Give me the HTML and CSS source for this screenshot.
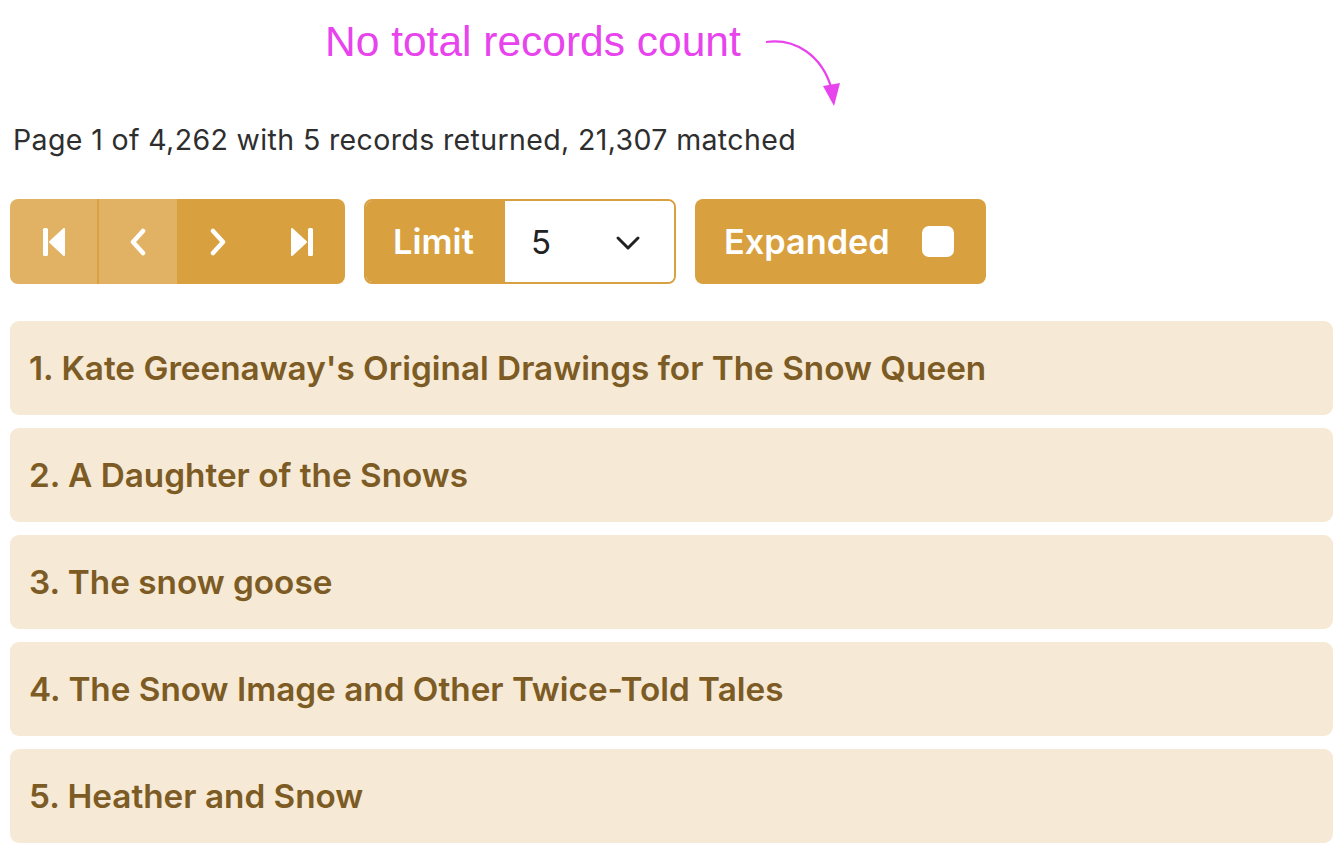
FILE: index.html
```html
<!DOCTYPE html>
<html lang="en">
<head>
<meta charset="utf-8">
<title>Results</title>
<link rel="stylesheet" href="styles.css">
</head>
<body>
<div class="page">
  <div class="note">
    <span class="note-text">No total records count</span>
    <svg class="note-arrow" width="80" height="80" viewBox="0 0 80 80">
      <path d="M2 8 C 30 4, 58 20, 68 56" fill="none" stroke="#e844ee" stroke-width="2.2"/>
      <path d="M59 52 L 76 49 L 70 72 Z" fill="#e844ee"/>
    </svg>
  </div>
  <p class="status">Page 1 of 4,262 with 5 records returned, 21,307 matched</p>
  <div class="toolbar">
    <div class="pager">
      <button class="pg pg-first is-disabled" aria-label="First page">
        <svg width="26" height="32" viewBox="0 0 26 32"><rect x="2" y="2" width="5" height="28" rx="1.5" fill="#fff"/><path d="M23 3 L 9 16 L 23 29 Z" fill="#fff" stroke="#fff" stroke-width="2" stroke-linejoin="round"/></svg>
      </button>
      <button class="pg pg-prev is-disabled" aria-label="Previous page">
        <svg width="22" height="32" viewBox="0 0 22 32"><path d="M16 5 L 6 16 L 16 27" fill="none" stroke="#fff" stroke-width="4.5" stroke-linecap="round" stroke-linejoin="round"/></svg>
      </button>
      <button class="pg pg-next" aria-label="Next page">
        <svg width="22" height="32" viewBox="0 0 22 32"><path d="M6 5 L 16 16 L 6 27" fill="none" stroke="#fff" stroke-width="4.5" stroke-linecap="round" stroke-linejoin="round"/></svg>
      </button>
      <button class="pg pg-last" aria-label="Last page">
        <svg width="26" height="32" viewBox="0 0 26 32"><path d="M3 3 L 17 16 L 3 29 Z" fill="#fff" stroke="#fff" stroke-width="2" stroke-linejoin="round"/><rect x="19" y="2" width="5" height="28" rx="1.5" fill="#fff"/></svg>
      </button>
    </div>
    <div class="limit">
      <span class="limit-label">Limit</span>
      <div class="select">
        <span class="select-value">5</span>
        <svg width="26" height="16" viewBox="0 0 26 16"><path d="M3 3 L 13 13 L 23 3" fill="none" stroke="#222" stroke-width="3" stroke-linecap="round" stroke-linejoin="round"/></svg>
      </div>
    </div>
    <label class="expanded">
      <span class="expanded-text">Expanded</span>
      <span class="box"></span>
    </label>
  </div>
  <ol class="results">
    <li class="card">1. Kate Greenaway's Original Drawings for The Snow Queen</li>
    <li class="card">2. A Daughter of the Snows</li>
    <li class="card">3. The snow goose</li>
    <li class="card">4. The Snow Image and Other Twice-Told Tales</li>
    <li class="card">5. Heather and Snow</li>
  </ol>
</div>
</body>
</html>
```
FILE: styles.css
```css
* { box-sizing: border-box; }
html, body { margin: 0; padding: 0; background: #fff; }
body { font-family: Inter, "Noto Sans", sans-serif; }

.page {
  padding: 0 9px 0 10px;
}

.note {
  position: relative;
  height: 122px;
  padding: 14px 0 0 315px;
}
.note-text {
  font-family: "Liberation Sans", Arial, sans-serif;
  font-size: 42.5px;
  color: #e844ee;
  line-height: 56px;
}
.note-arrow {
  position: absolute;
  left: 754px;
  top: 34px;
}

.status {
  margin: 0;
  padding-left: 3px;
  font-size: 28.5px;
  letter-spacing: 0.37px;
  line-height: 36px;
  color: #2e2e2e;
  height: 77px;
}

.toolbar {
  display: flex;
  gap: 19px;
  height: 85px;
}

.pager {
  display: flex;
  border-radius: 8px;
  overflow: hidden;
}
.pg {
  border: 0;
  margin: 0;
  padding: 0;
  display: flex;
  align-items: center;
  justify-content: center;
  background: #d8a03f;
  height: 85px;
}
.pg.is-disabled { background: #e1b264; }
.pg-first { width: 89px; border-right: 2px solid #d9a240; }
.pg-prev { width: 78px; }
.pg-next { width: 81px; }
.pg-last { width: 87px; }

.limit {
  display: flex;
  border: 2px solid #d8a03f;
  border-radius: 8px;
  overflow: hidden;
  width: 312px;
}
.limit-label {
  display: flex;
  align-items: center;
  width: 139px;
  padding-left: 27px;
  background: #d8a03f;
  color: #fff;
  font-size: 34.5px;
  font-weight: 600;
}
.select {
  flex: 1;
  display: flex;
  align-items: center;
  justify-content: space-between;
  padding: 0 33px 0 26px;
  background: #fff;
  color: #222;
  font-size: 33px;
}
.select svg { margin-top: 2px; }

.expanded {
  display: flex;
  align-items: center;
  width: 291px;
  padding-left: 29px;
  background: #d8a03f;
  border-radius: 8px;
  color: #fff;
  font-size: 34.3px;
  font-weight: 600;
}
.expanded-text { width: 198px; }
.box {
  width: 32px;
  height: 31px;
  background: #fff;
  border-radius: 7px;
}

.results {
  list-style: none;
  margin: 37px 0 0;
  padding: 0;
  display: flex;
  flex-direction: column;
  gap: 13px;
}
.card {
  height: 94px;
  display: flex;
  align-items: center;
  padding: 0 19px;
  background: #f6e9d5;
  border-radius: 9px;
  color: #7c5b24;
  font-size: 33.3px;
  font-weight: 600;
}
```
